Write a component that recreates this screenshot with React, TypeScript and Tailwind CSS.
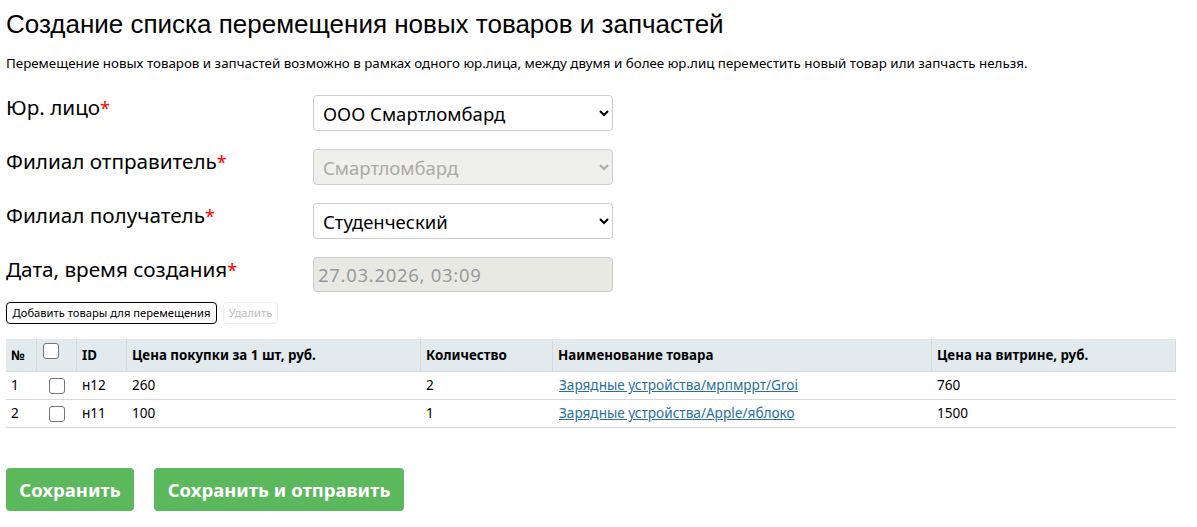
const body = "font-['Noto_Sans','Open_Sans',sans-serif]";

const rows = [
  { n: 1, id: 'н12', price: '260', qty: '2', name: 'Зарядные устройства/мрпмррт/Groi', sale: '760' },
  { n: 2, id: 'н11', price: '100', qty: '1', name: 'Зарядные устройства/Apple/яблоко', sale: '1500' },
];

function Label({ text }: { text: string }) {
  return (
    <label className="w-[307px] shrink-0 text-[20.7px] leading-[24px] text-black">
      {text}
      <span className="text-[18px] text-[#ff0000]">*</span>
    </label>
  );
}

function Check() {
  return <input type="checkbox" className="m-0 h-4 w-4 appearance-none rounded-[3px] border border-[#767676] bg-white" />;
}

function Select({ value, disabled }: { value: string; disabled?: boolean }) {
  return (
    <select
      disabled={disabled}
      defaultValue={value}
      className={`h-9 w-[300px] rounded-[4px] border border-[#cccccc] pl-[5px] text-[18.5px] ${disabled ? 'bg-[#efefeb] text-[#aaaaaa]' : 'bg-white text-black'}`}
    >
      <option>{value}</option>
    </select>
  );
}

export default function App() {
  return (
    <div className={`h-[527px] w-[1197px] overflow-hidden bg-white pl-1.5 pr-[21px] text-black ${body}`}>
      <h1 className="pt-[10px] font-['Liberation_Sans',sans-serif] text-[26px] leading-[28px]">
        Создание списка перемещения новых товаров и запчастей
      </h1>
      <p className="mt-[16px] text-[13.35px] leading-[18px]">
        Перемещение новых товаров и запчастей возможно в рамках одного юр.лица, между двумя и более юр.лиц переместить новый товар или запчасть нельзя.
      </p>

      <div className="mt-[23px] flex flex-col gap-[18px]">
        <div className="flex"><Label text="Юр. лицо" /><Select value="ООО Смартломбард" /></div>
        <div className="flex"><Label text="Филиал отправитель" /><Select value="Смартломбард" disabled /></div>
        <div className="flex"><Label text="Филиал получатель" /><Select value="Студенческий" /></div>
        <div className="flex">
          <Label text="Дата, время создания" />
          <input
            disabled
            value="27.03.2026, 03:09"
            readOnly
            className="h-[35px] w-[300px] rounded-[4px] border border-[#cccccc] bg-[#e9e9e4] px-1 text-[18.5px] tracking-[0.7px] text-[#999999]"
          />
        </div>
      </div>

      <div className="mt-[10px] flex gap-[6px] text-[11.2px]">
        <button className="h-[22px] w-[211px] rounded-[4px] border border-black bg-white text-black">Добавить товары для перемещения</button>
        <button disabled className="h-[22px] w-[55px] rounded-[4px] border border-[#eeeeee] bg-white text-[#bbbbbb]">Удалить</button>
      </div>

      <table className="mt-[15px] w-[1170px] table-fixed border-separate border-spacing-0 text-[13.6px]">
        <colgroup>
          <col className="w-[31px]" />
          <col className="w-[40px]" />
          <col className="w-[50px]" />
          <col className="w-[294px]" />
          <col className="w-[132px]" />
          <col className="w-[379px]" />
          <col />
        </colgroup>
        <thead>
          <tr className="h-[33px] bg-[#e2eaee] text-left text-[13.35px] font-bold">
            <th className="border-r border-b border-[#d3dadd] px-[5px]">№</th>
            <th className="border-r border-b border-[#d3dadd] pt-[4px] pl-[6px] align-top"><Check /></th>
            <th className="border-r border-b border-[#d3dadd] px-[5px]">ID</th>
            <th className="border-r border-b border-[#d3dadd] px-[5px]">Цена покупки за 1 шт, руб.</th>
            <th className="border-r border-b border-[#d3dadd] px-[5px]">Количество</th>
            <th className="border-r border-b border-[#d3dadd] px-[5px]">Наименование товара</th>
            <th className="border-r border-b border-[#d3dadd] px-[5px]">Цена на витрине, руб.</th>
          </tr>
        </thead>
        <tbody>
          {rows.map(r => (
            <tr key={r.n} className="h-[28px]">
              <td className="border-b border-[#d8d8d8] px-[5px]">{r.n}</td>
              <td className="border-b border-[#d8d8d8] pl-[12px]"><div className="flex"><Check /></div></td>
              <td className="border-b border-[#d8d8d8] px-[5px]">{r.id}</td>
              <td className="border-b border-[#d8d8d8] px-[5px]">{r.price}</td>
              <td className="border-b border-[#d8d8d8] px-[5px]">{r.qty}</td>
              <td className="border-b border-[#d8d8d8] pr-[5px] pl-[6px]"><a href="#" className="text-[#2a6f9e] underline">{r.name}</a></td>
              <td className="border-b border-[#d8d8d8] px-[5px]">{r.sale}</td>
            </tr>
          ))}
        </tbody>
      </table>

      <div className="mt-[40px] flex gap-5">
        <button className="h-[43px] w-[128px] rounded-[4px] bg-[#5cb85c] text-[18.5px] font-bold text-white">Сохранить</button>
        <button className="h-[43px] w-[250px] rounded-[4px] bg-[#5cb85c] text-[18.5px] font-bold text-white">Сохранить и отправить</button>
      </div>
    </div>
  );
}
